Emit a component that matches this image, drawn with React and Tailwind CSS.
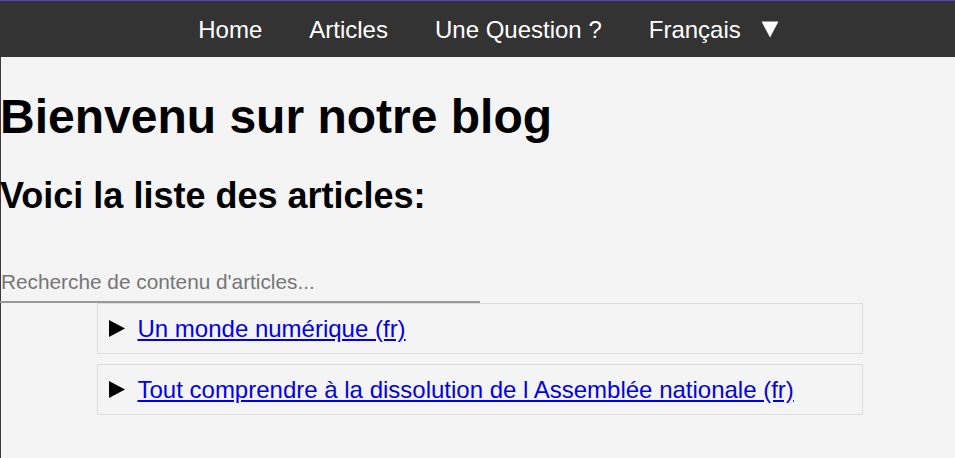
import React from 'react';

const navItems = ['Home', 'Articles', 'Une Question ?'];

const articles = [
  { id: 1, title: 'Un monde numérique (fr)' },
  { id: 2, title: 'Tout comprendre à la dissolution de l Assemblée nationale (fr)' },
];

function Triangle({ className }) {
  return (
    <svg viewBox="0 0 16 17" className={className}>
      <polygon points="0,0 16,8.5 0,17" fill="currentColor" />
    </svg>
  );
}

export default function App() {
  return (
    <div className="min-h-screen bg-[#f4f4f4] font-['Liberation_Sans',Arial,sans-serif] text-black shadow-[inset_1px_0_0_#3a3a3a]">
      {/* top bar */}
      <nav className="border-t border-[#5b3cc4] bg-[#333333]">
        <ul className="flex h-[56px] items-center justify-center gap-[47px] pl-[22px] text-[24px] leading-[27px] text-white">
          {navItems.map((item) => (
            <li key={item}>
              <a href="#">{item}</a>
            </li>
          ))}
          <li className="flex items-center gap-[20px]">
            <span>Français</span>
            <Triangle className="h-[17px] w-[18px] rotate-90 text-white" />
          </li>
        </ul>
      </nav>

      <main>
        <h1 className="mt-[33px] text-[48px] font-bold leading-[54px]">Bienvenu sur notre blog</h1>
        <h2 className="mt-[32px] text-[36px] font-bold leading-[40px]">Voici la liste des articles:</h2>

        <input
          type="text"
          placeholder="Recherche de contenu d'articles..."
          className="mt-[46px] block w-[480px] border-b-2 border-[#999999] bg-transparent px-[1px] py-[8px] text-[20.8px] leading-[23px] outline-none placeholder:text-[#767676]"
        />

        <div className="flex flex-col gap-[10px] pl-[4px]">
          {articles.map((a) => (
            <div
              key={a.id}
              className="mx-auto w-[766px] border border-[#dcdcdc] px-[11px] py-[10px]"
            >
              <div className="flex items-center gap-[13px] text-[24px] leading-[29px]">
                <Triangle className="h-[17px] w-[16px] shrink-0 text-black" />
                <a href="#" className="text-[#0000ee] underline">
                  {a.title}
                </a>
              </div>
            </div>
          ))}
        </div>
      </main>
    </div>
  );
}
